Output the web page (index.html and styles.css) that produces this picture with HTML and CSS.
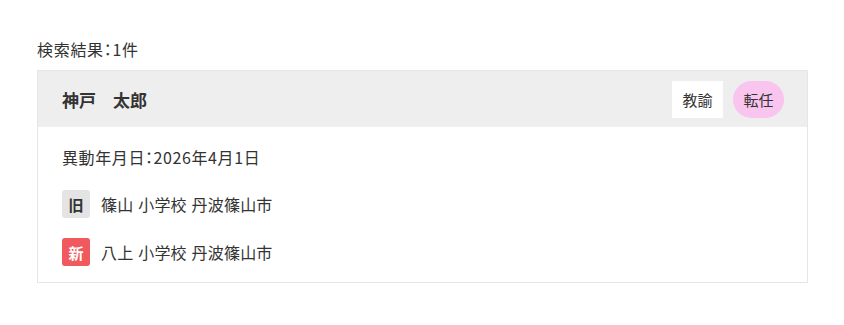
FILE: index.html
```html
<!DOCTYPE html>
<html lang="ja">
<head>
<meta charset="utf-8">
<link rel="stylesheet" href="styles.css">
</head>
<body>
<div class="page">
  <p class="count">検索結果：1件</p>
  <div class="card">
    <div class="card-head">
      <div class="name">神戸　太郎</div>
      <div class="tags">
        <span class="tag tag-role">教諭</span>
        <span class="tag tag-type">転任</span>
      </div>
    </div>
    <div class="card-body">
      <div class="date">異動年月日：2026年4月1日</div>
      <div class="row"><span class="badge badge-old">旧</span><span class="school">篠山 小学校 丹波篠山市</span></div>
      <div class="row"><span class="badge badge-new">新</span><span class="school">八上 小学校 丹波篠山市</span></div>
    </div>
  </div>
</div>
</body>
</html>
```
FILE: styles.css
```css
* { box-sizing: border-box; }
html, body { margin: 0; padding: 0; background: #fff; }
body {
  font-family: "Noto Sans CJK JP", "Noto Sans", sans-serif;
  color: #333;
  font-size: 16px;
}
.page { padding: 37px 36px 0 37px; }
.count {
  margin: 0 0 9px;
  font-size: 16px;
  line-height: 24px;
  font-feature-settings: "halt";
  letter-spacing: 0.7px;
}
.card {
  width: 771px;
  border: 1px solid #e6e6e6;
}
.card-head {
  background: #eeeeee;
  height: 56px;
  display: flex;
  align-items: center;
  justify-content: space-between;
  padding: 0 23px 0 24px;
}
.name { font-weight: bold; font-size: 17px; }
.tags { display: flex; gap: 10px; align-items: center; }
.tag {
  height: 37px;
  width: 51px;
  display: inline-flex;
  align-items: center;
  justify-content: center;
  font-size: 15px;
}
.tag-role { background: #fff; }
.tag-type { background: #f9c4ee; border-radius: 19px; width: 51px; }
.card-body { padding: 18px 23px 16px 24px; }
.date {
  line-height: 24px;
  margin-bottom: 21px;
  letter-spacing: 0.6px;
  font-feature-settings: "halt";
}
.row { display: flex; align-items: center; gap: 11px; height: 28px; margin-bottom: 20px; }
.row:last-child { margin-bottom: 0; }
.school { letter-spacing: 0.2px; word-spacing: 1px; }
.badge {
  width: 28px; height: 28px;
  border-radius: 3px;
  display: inline-flex; align-items: center; justify-content: center;
  font-weight: bold; font-size: 15px;
}
.badge-old { background: #e4e4e4; color: #333; }
.badge-new { background: #f0595d; color: #fff; }
```
